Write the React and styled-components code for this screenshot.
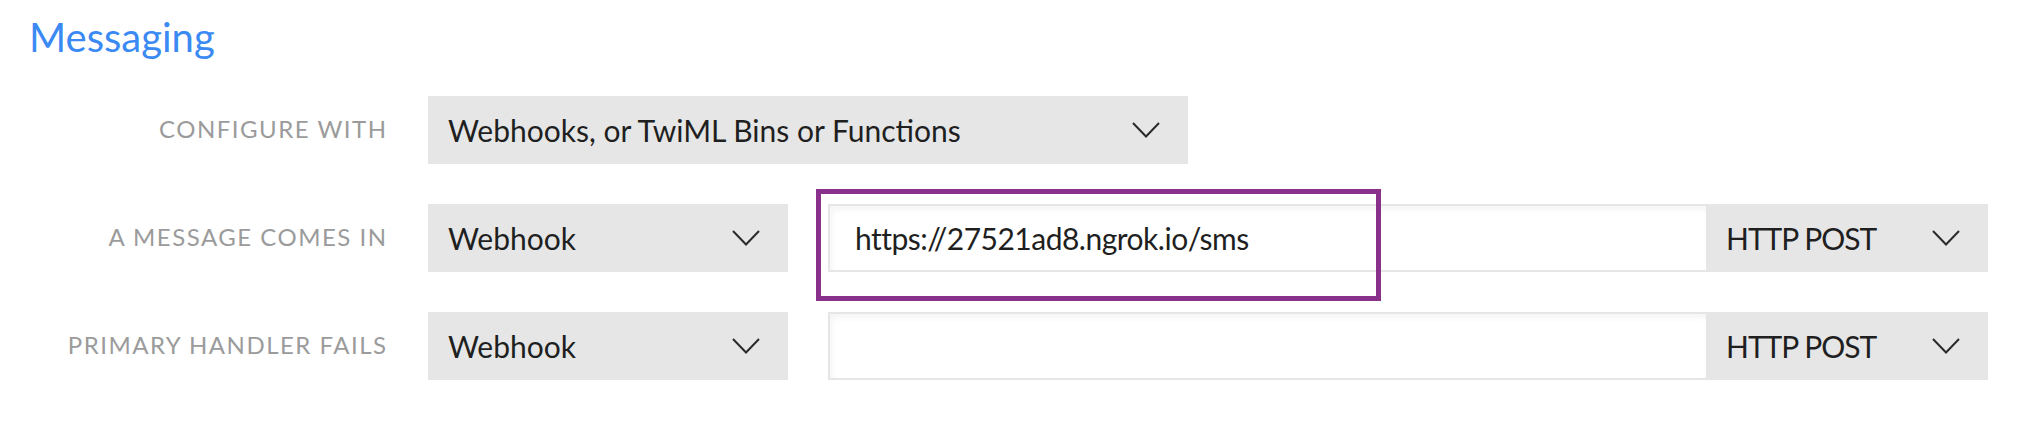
import React from "react";
import styled, { createGlobalStyle } from "styled-components";

const GlobalStyle = createGlobalStyle`
  html, body {
    margin: 0;
    padding: 0;
    background: #ffffff;
  }
  body {
    font-family: Lato, "Open Sans", sans-serif;
    -webkit-font-smoothing: antialiased;
  }
`;

const Page = styled.div`
  width: 2034px;
  height: 448px;
  padding: 13px 0 0 29px;
  box-sizing: border-box;
`;

const Title = styled.h2`
  margin: 0;
  font-size: 40px;
  line-height: 1.2;
  font-weight: 400;
  color: #3b8af4;
`;

const Form = styled.div`
  display: grid;
  grid-template-columns: 357px 1fr;
  column-gap: 42px;
  row-gap: 40px;
  margin-top: 35px;
`;

const Label = styled.div`
  display: flex;
  align-items: center;
  justify-content: flex-end;
  padding-bottom: 3px;
  margin-right: -1.5px;
  font-size: 24px;
  letter-spacing: 1.5px;
  text-transform: uppercase;
  color: #9b9b9b;
  white-space: nowrap;
`;

const Controls = styled.div`
  display: flex;
  align-items: stretch;
  height: 68px;
  gap: ${(p) => p.gap || 0}px;
`;

const Select = styled.div`
  display: flex;
  align-items: center;
  justify-content: space-between;
  width: ${(p) => p.width}px;
  flex: none;
  box-sizing: border-box;
  padding: 0 28px 0 20px;
  background: #e6e6e6;
  color: #1f1f1f;
  font-size: 30px;
  letter-spacing: ${(p) => p.tracking || 0}px;
  white-space: nowrap;
`;

const Chevron = () => (
  <svg width="28" height="16" viewBox="0 0 28 16">
    <polyline
      points="1,1 14,14.5 27,1"
      fill="none"
      stroke="#2a2a2a"
      strokeWidth="2"
    />
  </svg>
);

const UrlGroup = styled.div`
  display: flex;
  align-items: stretch;
`;

const UrlField = styled.div`
  position: relative;
  display: flex;
  align-items: center;
  width: ${(p) => p.width}px;
  box-sizing: border-box;
  padding-left: 25px;
  border: 2px solid #e6e6e6;
  border-right: none;
  background: #fff;
  box-shadow: inset 2px 4px 6px rgba(0, 0, 0, 0.045);
  color: #1f1f1f;
  font-size: 30px;
  letter-spacing: -0.5px;
  white-space: nowrap;
`;

const Highlight = styled.div`
  position: absolute;
  left: -14px;
  top: -17px;
  width: 565px;
  height: 112px;
  box-sizing: border-box;
  border: 5px solid #892f8c;
  pointer-events: none;
`;

const handlerRow = (label, url, highlighted) => (
  <>
    <Label>{label}</Label>
    <Controls gap={40}>
      <Select width={360}>
        Webhook
        <Chevron />
      </Select>
      <UrlGroup>
        <UrlField width={878}>
          {url}
          {highlighted && <Highlight />}
        </UrlField>
        <Select width={282} tracking={-1}>
          HTTP POST
          <Chevron />
        </Select>
      </UrlGroup>
    </Controls>
  </>
);

const App = () => {
  return (
    <Page>
      <GlobalStyle />
      <Title>Messaging</Title>
      <Form>
        <Label>Configure with</Label>
        <Controls>
          <Select width={760}>
            Webhooks, or TwiML Bins or Functions
            <Chevron />
          </Select>
        </Controls>
        {handlerRow("A message comes in", "https://27521ad8.ngrok.io/sms", true)}
        {handlerRow("Primary handler fails", "", false)}
      </Form>
    </Page>
  );
};

export default App;
